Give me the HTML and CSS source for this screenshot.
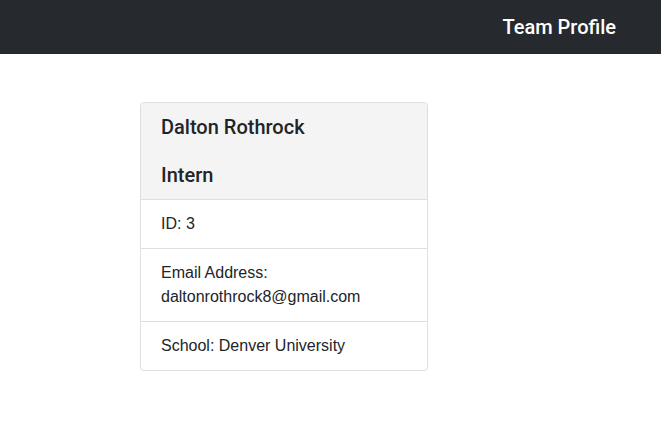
FILE: index.html
```html
<!DOCTYPE html>
<html lang="en">
<head>
<meta charset="utf-8">
<title>Team Profile</title>
<link rel="stylesheet" href="styles.css">
</head>
<body>
<nav class="navbar">
  <span class="brand">Team Profile</span>
</nav>
<main class="team">
  <div class="card">
    <div class="card-header">
      <h2 class="name">Dalton Rothrock</h2>
      <h3 class="role">Intern</h3>
    </div>
    <ul class="list">
      <li class="item">ID: 3</li>
      <li class="item">Email Address: daltonrothrock8@gmail.com</li>
      <li class="item">School: Denver University</li>
    </ul>
  </div>
</main>
</body>
</html>
```
FILE: styles.css
```css
* { box-sizing: border-box; }
body {
  margin: 0;
  font-family: "Liberation Sans", Arial, sans-serif;
  color: #212529;
  background: #fff;
  font-size: 16px;
  line-height: 24px;
}
.navbar {
  height: 54px;
  background: #262a2f;
  display: flex;
  align-items: center;
  justify-content: flex-end;
  padding-right: 45px;
}
.brand {
  color: #fff;
  font-family: Roboto, "Liberation Sans", sans-serif;
  font-size: 20px;
  font-weight: 500;
  line-height: 24px;
}
.team {
  padding: 48px 0 0 140px;
}
.card {
  width: 288px;
  border: 1px solid #dfdfdf;
  border-radius: 4px;
  overflow: hidden;
}
.card-header {
  background: #f4f4f4;
  padding: 12px 20px;
  border-bottom: 1px solid #dfdfdf;
}
.name, .role {
  margin: 0;
  font-family: Roboto, "Liberation Sans", sans-serif;
  font-size: 20px;
  font-weight: 500;
  line-height: 24px;
}
.name { margin-bottom: 24px; }
.list {
  list-style: none;
  margin: 0;
  padding: 0;
}
.item {
  padding: 12px 20px;
  border-bottom: 1px solid #dfdfdf;
}
.item:last-child { border-bottom: 0; }
```
